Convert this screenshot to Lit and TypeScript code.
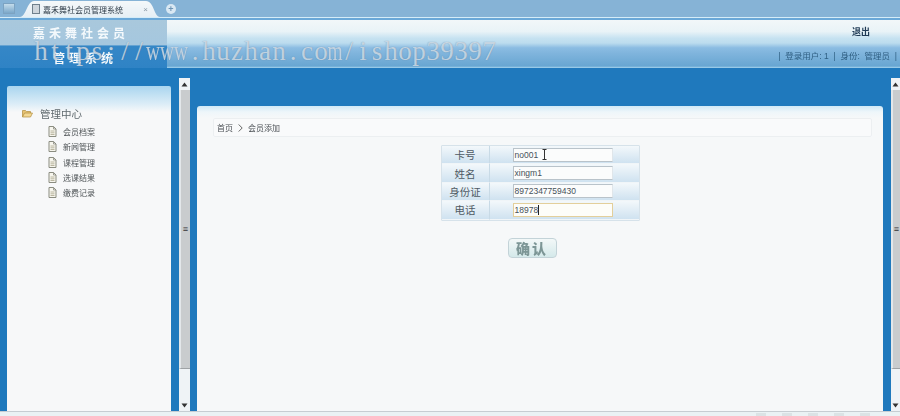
import { LitElement, html, css, svg } from "lit";
import { customElement } from "lit/decorators.js";

const docIcon = svg`<svg class="doc" width="9" height="11" viewBox="0 0 9 11"><path d="M1 .5h4.600L8 3v7.500H1z" fill="#f7f6ee" stroke="#8a8c80"/><path d="M5.500.5V3H8" fill="none" stroke="#8a8c80" stroke-width=".8"/><path d="M2.500 5h4M2.500 6.800h4M2.500 8.500h4" stroke="#a9a68c" stroke-width=".8"/></svg>`;

const arrowUp = svg`<svg width="7" height="5" viewBox="0 0 7 5"><path d="M3.500 .5 6.500 4.500H.5z" fill="#333"/></svg>`;
const arrowDown = svg`<svg width="7" height="5" viewBox="0 0 7 5"><path d="M3.500 4.500 6.500 .5H.5z" fill="#333"/></svg>`;

@customElement("app-root")
export class AppRoot extends LitElement {
  static styles = css`
    :host {
      display: block;
      position: relative;
      width: 900px;
      height: 416px;
      overflow: hidden;
      font-family: "Liberation Sans", "Noto Sans CJK SC", sans-serif;
      background: #1f79bd;
    }
    .tabbar {
      height: 17px;
      background: #86b3d6;
      display: flex;
      align-items: flex-end;
    }
    .win-icon {
      width: 12px;
      height: 11px;
      margin: 0 5px 3px 3px;
      background: linear-gradient(#c4dceb, #7ba8ca);
      border: 1px solid #7ca3c2;
      box-sizing: border-box;
      flex: none;
    }
    .tab {
      width: 140px;
      height: 16px;
      box-sizing: border-box;
      background: linear-gradient(#f4f8fa, #e6eff5);
      clip-path: path("M0 16 C6 16 7 0 14 0 L126 0 C134 0 134 16 140 16 Z");
      display: flex;
      align-items: center;
      padding: 0 12px;
      gap: 3px;
      font-size: 8px;
      color: #2f3d49;
      filter: blur(0.35px);
      margin-right: 6px;
    }
    .tab-page {
      width: 8px;
      height: 10px;
      background: #cfd6dc;
      border: 1px solid #70808c;
      box-sizing: border-box;
      flex: none;
    }
    .tab-title { flex: 1; white-space: nowrap; }
    .tab-close { font-size: 8px; color: #8a99a5; }
    .plus {
      width: 10px;
      height: 10px;
      margin-bottom: 3px;
      border-radius: 50%;
      background: #d9e8f3;
      color: #6d94b5;
      font-size: 9px;
      line-height: 10px;
      text-align: center;
      font-weight: bold;
      filter: blur(0.3px);
    }
    .rule {
      height: 3px;
      background: linear-gradient(#d5ecf8 0 1px, #6aa8d8 1px 100%);
    }
    .header {
      height: 48px;
      display: flex;
      justify-content: space-between;
      background: linear-gradient(
        #f2f7f9 0,
        #e9f3f7 24%,
        #c6e2f1 38%,
        #bcdcee 48%,
        #8bbce2 58%,
        #7fb4dc 70%,
        #68a6d2 96%,
        #a8d5ee 100%
      );
    }
    .logo {
      width: 167px;
      flex: none;
      box-sizing: border-box;
      background: linear-gradient(#a9c8dc 0, #a5c7df 52%, #3587c7 54%, #2f83c5 100%);
      color: #f4f9fc;
      font-weight: bold;
      font-family: "Noto Sans CJK SC", sans-serif;
      filter: blur(0.5px);
    }
    .logo-a {
      font-size: 12px;
      letter-spacing: 4px;
      padding: 4px 0 0 33px;
      line-height: 17px;
      white-space: nowrap;
    }
    .logo-b {
      font-size: 12px;
      letter-spacing: 4px;
      padding: 9px 0 0 53px;
      line-height: 15px;
      white-space: nowrap;
    }
    .user {
      display: flex;
      flex-direction: column;
      align-items: flex-end;
      filter: blur(0.3px);
    }
    .logout {
      font-size: 9px;
      font-weight: bold;
      color: #1f3a55;
      padding: 7px 30px 0 0;
      line-height: 11px;
    }
    .status {
      font-size: 8.500px;
      line-height: 11px;
      color: #2f5f82;
      padding: 13px 3px 0 0;
      white-space: pre;
    }
    .main {
      height: 343px;
      display: flex;
      padding-left: 7px;
      box-sizing: border-box;
    }
    .side {
      width: 164px;
      margin-top: 18px;
      flex: none;
      box-sizing: border-box;
      background: linear-gradient(#a9d5ef 0, #dcedf7 18px, #f7f8f9 26px);
      border-radius: 2px 2px 0 0;
      padding-top: 20px;
    }
    .tree-root {
      display: flex;
      align-items: center;
      gap: 7px;
      padding-left: 15px;
      font-size: 10.500px;
      color: #5f696e;
      height: 14px;
      filter: blur(0.3px);
    }
    .tree { margin-top: 4px; }
    .tree-item {
      display: flex;
      align-items: center;
      gap: 6px;
      padding-left: 41px;
      height: 15.300px;
      font-size: 8px;
      color: #4f5457;
      filter: blur(0.35px);
    }
    .scroll {
      width: 11px;
      margin: 10px 7px 0 8px;
      flex: none;
      background: #eff3f6;
      display: flex;
      flex-direction: column;
      align-items: center;
      justify-content: space-between;
    }
    .scroll.right {
      width: 9px;
      margin: 10px 0 0 8px;
    }
    .btn-arrow {
      height: 12px;
      display: flex;
      align-items: center;
      justify-content: center;
    }
    .thumb {
      flex: 1;
      width: 100%;
      box-sizing: border-box;
      background: #c9ccce;
      border-left: 2px solid #e3e7ea;
      border-bottom: 1px solid #9ea2a5;
      margin-bottom: 30px;
      display: flex;
      align-items: center;
      justify-content: center;
      font-size: 9px;
      color: #333;
    }
    .panel {
      width: 686px;
      margin-top: 38px;
      flex: none;
      box-sizing: border-box;
      background: linear-gradient(#cfe8f6 0, #eef6fa 6px, #f6f8f9 12px);
      border-radius: 3px 3px 0 0;
      padding: 12px 11px 0 16px;
      display: flex;
      flex-direction: column;
      align-items: center;
    }
    .crumb {
      align-self: stretch;
      height: 19px;
      background: #f9fafb;
      border: 1px solid #eceff1;
      box-sizing: border-box;
      border-radius: 2px;
      display: flex;
      align-items: center;
      padding-left: 3px;
      gap: 5px;
      font-size: 8px;
      color: #4a4f54;
      filter: blur(0.3px);
    }
    .form {
      margin: 8px 5px 0 0;
      width: 199px;
      display: grid;
      grid-template-columns: 48px 1fr;
      border: 1px solid #d6e2ea;
      box-sizing: border-box;
      border-radius: 1px;
    }
    .label, .cell {
      height: 18.400px;
      box-sizing: border-box;
      background: linear-gradient(#f3f8fb, #cfe2f0);
      border-bottom: 1px solid #f0f5f8;
      display: flex;
      align-items: center;
    }
    .label {
      justify-content: center;
      font-size: 10.500px;
      color: #4f5a64;
      border-right: 1px solid #c8dae6;
    }
    .cell { padding-left: 23px; }
    .field {
      width: 100px;
      height: 14px;
      box-sizing: border-box;
      background: #fbfcfc;
      border: 1px solid #b9c3ca;
      border-right-color: #e0e6ea;
      font-size: 8.500px;
      line-height: 12px;
      color: #47515a;
      padding-left: 1px;
      position: relative;
      display: flex;
      align-items: center;
      white-space: nowrap;
    }
    .field.focus {
      border-color: #e3cf9b;
      background: #fdfdf9;
    }
    .caret { width: 1px; height: 10px; background: #222; }
    .ibeam {
      position: absolute;
      left: 28px;
      top: 0;
      width: 5px;
      height: 11px;
    }
    .confirm {
      margin: 17px 21px 0 0;
      width: 49px;
      height: 20px;
      box-sizing: border-box;
      border: 1px solid #c3d3d8;
      border-radius: 4px;
      background: linear-gradient(#f3f8f8, #d4e9ea);
      color: #7d9696;
      font-weight: 900;
      font-family: "Noto Sans CJK SC", sans-serif;
      font-size: 14px;
      letter-spacing: 2px;
      text-align: center;
      line-height: 18px;
      filter: blur(0.7px);
    }
    .footer {
      height: 5px;
      background: #eaf2f4;
      border-top: 1px solid #c6cdd2;
      box-sizing: border-box;
      display: flex;
      justify-content: flex-end;
      gap: 16px;
      padding: 1px 30px 0 0;
    }
    .tick {
      width: 10px;
      height: 3px;
      background: #dbe3e5;
      filter: blur(0.5px);
    }
    .wm {
      position: absolute;
      left: 34px;
      top: 34px;
      display: flex;
      font-family: "Liberation Serif", serif;
      font-size: 27px;
      line-height: 34px;
      color: rgba(228, 238, 245, 0.72);
      text-shadow: 0 0 1px rgba(85, 115, 145, 0.75);
      white-space: nowrap;
      pointer-events: none;
    }
    .wm span {
      width: 14px;
      text-align: center;
      display: flex;
      justify-content: center;
    }
    .wm span.wide { transform: scaleX(0.72); }
  `;

  render() {
    const items = ["会员档案", "新闻管理", "课程管理", "选课结果", "缴费记录"];
    const mark = [..."https://www.huzhan.com/ishop39397"];
    return html`
      <div class="tabbar">
        <div class="win-icon"></div>
        <div class="tab">
          <span class="tab-page"></span>
          <span class="tab-title">嘉禾舞社会员管理系统</span>
          <span class="tab-close">×</span>
        </div>
        <div class="plus">+</div>
      </div>
      <div class="rule"></div>
      <div class="header">
        <div class="logo">
          <div class="logo-a">嘉禾舞社会员</div>
          <div class="logo-b">管理系统</div>
        </div>
        <div class="user">
          <div class="logout">退出</div>
          <div class="status">|  登录用户: 1  |  身份:  管理员  |</div>
        </div>
      </div>
      <div class="main">
        <div class="side">
          <div class="tree-root">
            <svg width="11" height="9" viewBox="0 0 11 9"><path d="M.5 8V1.500h3l1 1H8.500V4" fill="#e8c474" stroke="#b08c3c" stroke-width=".7"/><path d="M.5 8 2.500 4H10.500L8.500 8z" fill="#f3d894" stroke="#b08c3c" stroke-width=".7"/></svg>
            <span>管理中心</span>
          </div>
          <div class="tree">
            ${items.map((t) => html`<div class="tree-item">${docIcon}<span>${t}</span></div>`)}
          </div>
        </div>
        <div class="scroll">
          <div class="btn-arrow">${arrowUp}</div>
          <div class="thumb">≡</div>
          <div class="btn-arrow">${arrowDown}</div>
        </div>
        <div class="panel">
          <div class="crumb">
            <span>首页</span>
            <svg width="5" height="8" viewBox="0 0 5 8"><path d="M.7.5 4.200 4 .7 7.500" fill="none" stroke="#555" stroke-width=".9"/></svg>
            <span>会员添加</span>
          </div>
          <div class="form">
            <div class="label">卡号</div>
            <div class="cell"><div class="field">no001<svg class="ibeam" viewBox="0 0 5 11"><path d="M.5.500h4M2.500.5v10M.5 10.500h4" stroke="#333" fill="none"/></svg></div></div>
            <div class="label">姓名</div>
            <div class="cell"><div class="field">xingm1</div></div>
            <div class="label">身份证</div>
            <div class="cell"><div class="field">8972347759430</div></div>
            <div class="label">电话</div>
            <div class="cell"><div class="field focus">18978<span class="caret"></span></div></div>
          </div>
          <div class="confirm">确认</div>
        </div>
        <div class="scroll right">
          <div class="btn-arrow">${arrowUp}</div>
          <div class="thumb">≡</div>
          <div class="btn-arrow">${arrowDown}</div>
        </div>
      </div>
      <div class="footer">
        <i class="tick"></i><i class="tick"></i><i class="tick"></i><i class="tick"></i><i class="tick"></i>
      </div>
      <div class="wm">${mark.map((c) => html`<span class=${c === "w" || c === "m" ? "wide" : ""}>${c}</span>`)}</div>
    `;
  }
}
